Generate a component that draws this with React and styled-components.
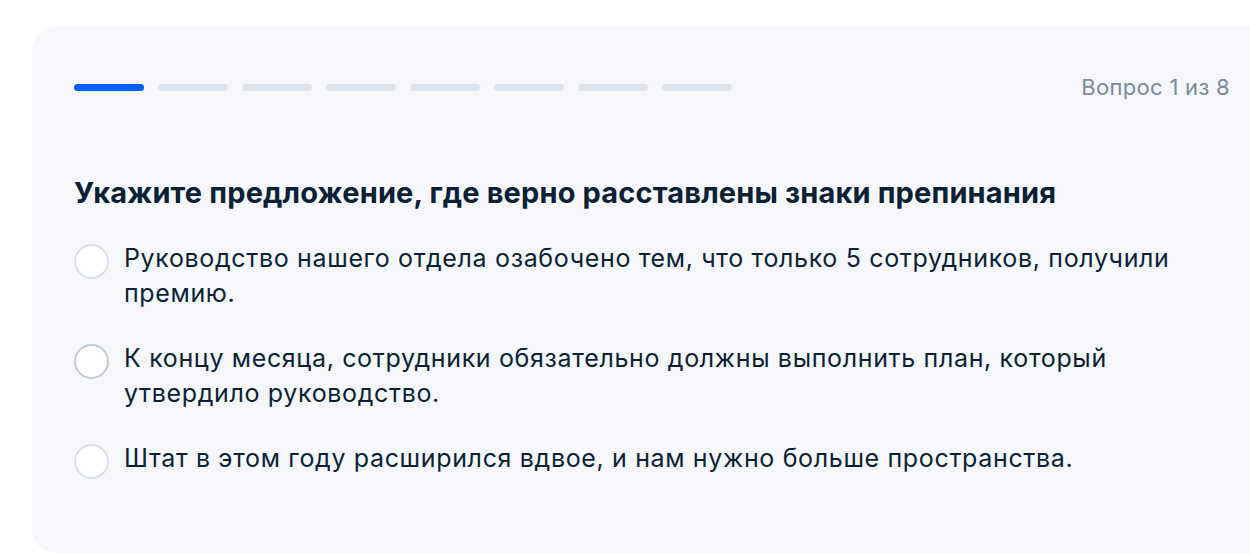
import React from 'react'
import styled, { createGlobalStyle } from 'styled-components'

const GlobalStyle = createGlobalStyle`
  html, body {
    margin: 0;
    padding: 0;
    background: #ffffff;
    overflow: hidden;
  }
  body {
    font-family: Inter, "Noto Sans", "Liberation Sans", sans-serif;
  }
`

const Page = styled.div`
  padding: 27px 0 0 32px;
  width: 1250px;
  height: 554px;
  box-sizing: border-box;
`

const Card = styled.div`
  width: 1240px;
  height: 526px;
  box-sizing: border-box;
  background: #f5f7fb;
  border-radius: 24px;
  padding: 50px 42px 0 42px;
`

const Header = styled.div`
  display: flex;
  align-items: center;
  justify-content: space-between;
  height: 20px;
`

const Steps = styled.div`
  display: flex;
  gap: 14px;
`

const Step = styled.div`
  width: 70px;
  height: 7px;
  border-radius: 4px;
  background: ${p => (p.active ? '#005ff9' : '#dee4ec')};
`

const Counter = styled.div`
  font-size: 22px;
  color: #7b8a9c;
  letter-spacing: 0.3px;
`

const Title = styled.h2`
  margin: 78px 0 0 0;
  font-size: 29px;
  line-height: 36px;
  font-weight: 700;
  color: #0b1f35;
  letter-spacing: 0.15px;
`

const Options = styled.div`
  display: flex;
  flex-direction: column;
  gap: 30px;
  margin-top: 30px;
`

const Option = styled.label`
  display: flex;
  align-items: flex-start;
  gap: 15px;
  cursor: pointer;
`

const Radio = styled.span`
  flex: none;
  width: 31px;
  height: 31px;
  margin-top: 3px;
  border-radius: 50%;
  background: #ffffff;
  border: 2px solid ${p => (p.hover ? '#bfccd8' : '#d8e0e9')};
`

const OptionText = styled.span`
  font-size: 25px;
  line-height: 35px;
  color: #0b1f35;
  letter-spacing: 0.65px;
`

const steps = [0, 1, 2, 3, 4, 5, 6, 7]

const answers = [
  'Руководство нашего отдела озабочено тем, что только 5 сотрудников, получили премию.',
  'К концу месяца, сотрудники обязательно должны выполнить план, который утвердило руководство.',
  'Штат в этом году расширился вдвое, и нам нужно больше пространства.',
]

export default function App() {
  return (
    <>
      <GlobalStyle />
      <Page>
        <Card>
          <Header>
            <Steps>
              {steps.map(i => (
                <Step key={i} active={i === 0} />
              ))}
            </Steps>
            <Counter>Вопрос 1 из 8</Counter>
          </Header>
          <Title>Укажите предложение, где верно расставлены знаки препинания</Title>
          <Options>
            {answers.map((a, i) => (
              <Option key={i}>
                <Radio hover={i === 1} />
                <OptionText>{a}</OptionText>
              </Option>
            ))}
          </Options>
        </Card>
      </Page>
    </>
  )
}
